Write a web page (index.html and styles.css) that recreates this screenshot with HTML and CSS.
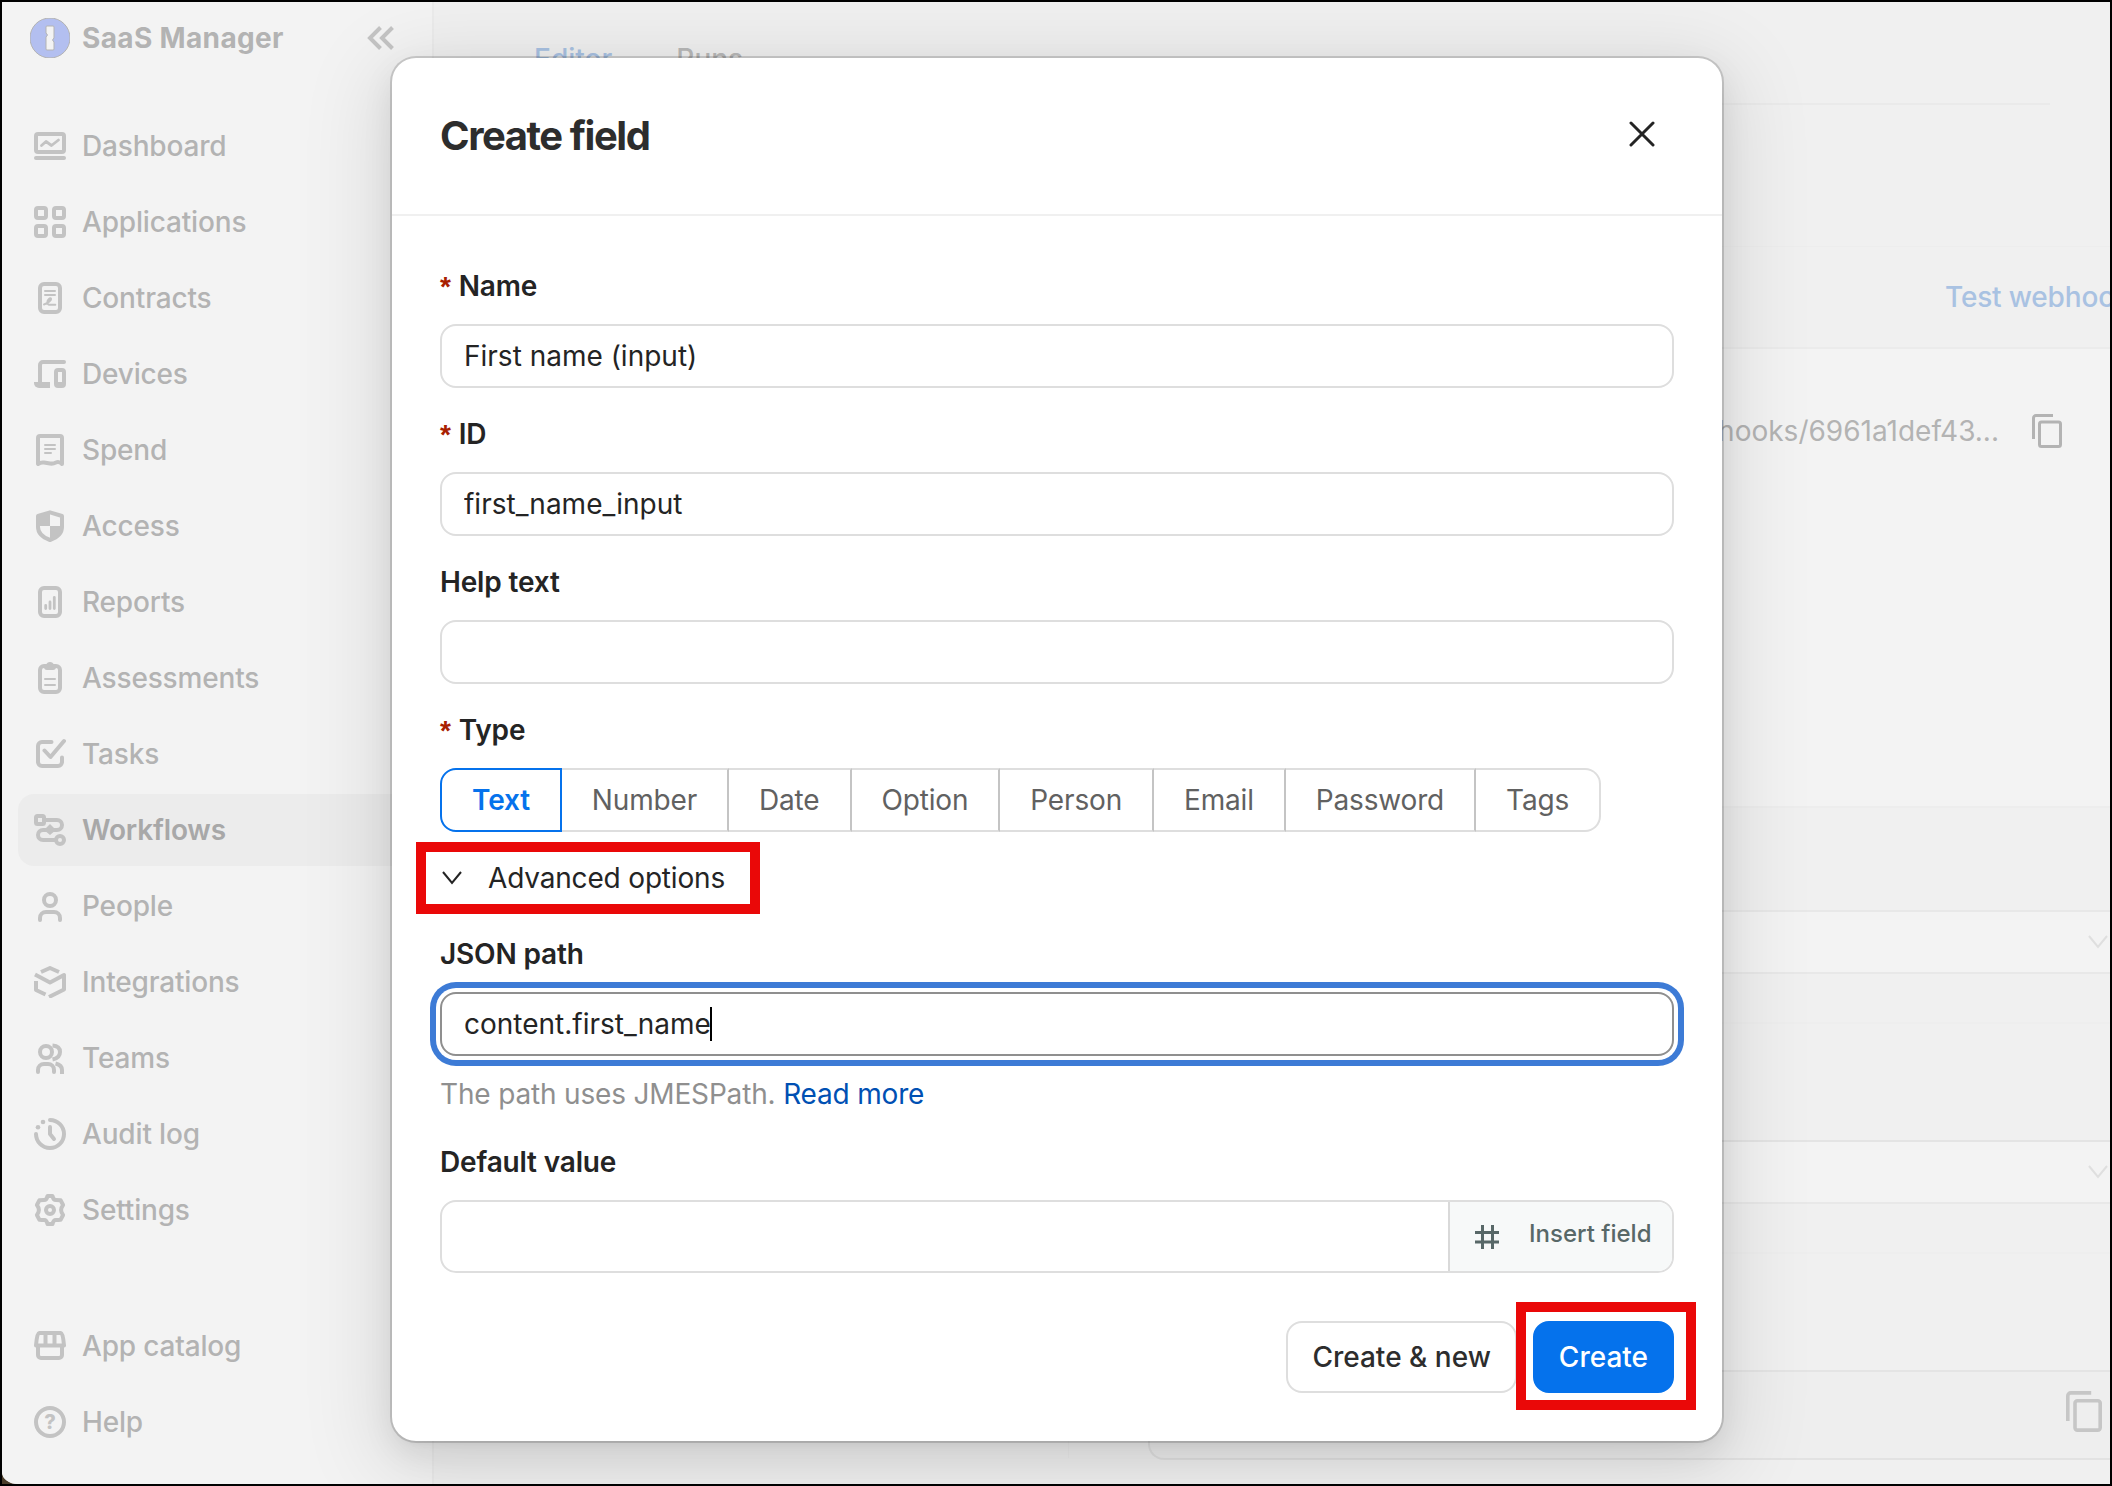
FILE: index.html
```html
<!DOCTYPE html>
<html lang="en">
<head>
    <meta charset="UTF-8">
    <meta name="viewport" content="width=device-width, initial-scale=1.0">
    <title>SaaS Manager - Create field</title>
    <link rel="stylesheet" href="styles.css">
</head>
<body>
    <div class="app">
        <aside class="sidebar">
            <div class="brand">
                <svg class="logo" viewBox="0 0 40 40"><circle cx="20" cy="20" r="20" fill="#b3bff0"/><path d="M17 8h6a1 1 0 0 1 1 1v11l-1.500 2 1.500 2v7a1 1 0 0 1-1 1h-6a1 1 0 0 1-1-1V19l1.500-2L16 15V9a1 1 0 0 1 1-1z" fill="#f3f3f3"/></svg>
                <span>SaaS Manager</span>
                <svg class="collapse" viewBox="0 0 28 24"><path d="M13.500 1.500 3 12l10.500 10.500M25.500 1.500 15 12l10.500 10.500"/></svg>
            </div>
            <nav class="nav">
                <a class="nav-item"><svg viewBox="0 0 32 32"><rect x="2" y="4" width="28" height="18" rx="2"/><path d="M2 28h28"/><path class="thin" d="M7.500 15.500l4.500-4 5.500 4 7-5.500"/></svg>Dashboard</a>
                <a class="nav-item"><svg viewBox="0 0 32 32"><rect x="2" y="2" width="10" height="10" rx="2"/><rect x="20" y="2" width="10" height="10" rx="2"/><rect x="2" y="20" width="10" height="10" rx="2"/><rect x="20" y="20" width="10" height="10" rx="2"/></svg>Applications</a>
                <a class="nav-item"><svg viewBox="0 0 32 32"><rect x="6" y="2" width="20" height="28" rx="4"/><path class="fine" d="M11 9h10M11 13h10M10 22.500c3-1 7.500-4 7-5.800-.6-1.400-3.600.8-3.600 3.600 0 2.400 2 2.700 3.400 2.500h4.500"/></svg>Contracts</a>
                <a class="nav-item"><svg viewBox="0 0 32 32"><path d="M30 4H9a3 3 0 0 0-3 3v18"/><path class="solid" d="M0 24h16v6H5a5 5 0 0 1-5-5z"/><rect x="22" y="12" width="8" height="16" rx="2"/><path class="solid" d="M22 24h8v4h-8z"/></svg>Devices</a>
                <a class="nav-item"><svg viewBox="0 0 32 32"><path d="M4 30V4a2 2 0 0 1 2-2h20a2 2 0 0 1 2 2v26q-3-3-6-1.500t-6 1-6-1-6 1.500z"/><path class="fine" d="M11 11h10M11 15h10M11 19h6"/></svg>Spend</a>
                <a class="nav-item"><svg viewBox="0 0 32 32"><path d="M16 2.300 4 6v11c0 6 5 10.500 12 13 7-2.500 12-7 12-13V6z"/><path class="solid" d="M16 2 4 6v10h12zM16 16h12v1c0 6-5 10.500-12 13z"/></svg>Access</a>
                <a class="nav-item"><svg viewBox="0 0 32 32"><rect x="6" y="2" width="20" height="28" rx="4"/><path class="thin" d="M11.700 19.500v3M16 16v6.500M20.300 11.500v11"/></svg>Reports</a>
                <a class="nav-item"><svg viewBox="0 0 32 32"><rect x="6" y="4" width="20" height="26" rx="4"/><path class="solid" d="M10 3h2q1-3 4-3t4 3h2v2a3 3 0 0 1-3 3h-6a3 3 0 0 1-3-3z"/><path class="fine" d="M11 17h10M11 23h10"/></svg>Assessments</a>
                <a class="nav-item"><svg viewBox="0 0 32 32"><path d="M17.500 4H8a4 4 0 0 0-4 4v16a4 4 0 0 0 4 4h16a4 4 0 0 0 4-4v-4.500M10.500 12.500l6 6.500L30 3"/></svg>Tasks</a>
                <a class="nav-item active"><svg viewBox="0 0 32 32"><rect x="2" y="2" width="8" height="8" rx="1.500"/><path d="M12 6h11a5 5 0 0 1 0 10H9a5 5 0 0 0 0 10h12"/><circle cx="26" cy="26" r="4"/><path class="solid" d="M16 10l6 6-6 5-6-5z"/></svg>Workflows</a>
                <a class="nav-item"><svg viewBox="0 0 32 32"><circle cx="16" cy="10" r="6"/><path d="M6 30v-2a6 6 0 0 1 6-6h8a6 6 0 0 1 6 6v2"/></svg>People</a>
                <a class="nav-item"><svg viewBox="0 0 32 32"><path class="cut" d="M7 6l9-4 9 4M1 8.500l15 8L30 9v14.500L15 31M2 15v9l9.500 4.500"/></svg>Integrations</a>
                <a class="nav-item"><svg viewBox="0 0 32 32"><circle cx="12" cy="10" r="6"/><path d="M4 30v-2a6 6 0 0 1 6-6h4a6 6 0 0 1 6 6v2"/><path class="cut" d="M18.500 3.500q7.500.5 7.500 6.500t-7.500 7.500M21.500 21.500Q28 23 28 28v4"/></svg>Teams</a>
                <a class="nav-item"><svg viewBox="0 0 32 32"><path d="M16 2A14 14 0 1 1 2 16M16 9v7l4 5"/><circle class="solid" cx="9" cy="4" r="2.300"/><circle class="solid" cx="4" cy="9.300" r="2.300"/></svg>Audit log</a>
                <a class="nav-item"><svg viewBox="0 0 32 32"><path d="M13.500 2h5q.8 4 3.300 4t4.800.3l2.500 4.700q-2 2.500-2 5t2 5l-2.500 4.700q-2.300.3-4.800.3T18.500 30h-5q-.8-4-3.300-4t-4.800-.3L2.900 21q2-2.500 2-5t-2-5l2.500-4.700q2.300-.3 4.800-.3T13.500 2z"/><circle cx="16" cy="16" r="4"/></svg>Settings</a>
            </nav>
            <nav class="nav nav-bottom">
                <a class="nav-item"><svg viewBox="0 0 32 32"><path d="M5 3h22q2 0 3 12.500H2Q3 3 5 3z"/><path d="M4 16v9a3 3 0 0 0 3 3h18a3 3 0 0 0 3-3v-9M11.500 4v11M20.500 4v11"/></svg>App catalog</a>
                <a class="nav-item"><svg viewBox="0 0 32 32"><circle cx="16" cy="16" r="14"/><text x="16" y="23" text-anchor="middle">?</text></svg>Help</a>
            </nav>
        </aside>

        <main class="main">
            <div class="tabs">
                <span class="tab current">Editor</span>
                <span class="tab">Runs</span>
            </div>
            <div class="workspace">
                <div class="canvas"></div>
                <div class="panel">
                    <div class="panel-head">Test webhook</div>
                    <div class="panel-url">
                        <span>webhooks/6961a1def43...</span>
                        <svg class="copy" viewBox="0 0 30 34"><path d="M1.500 25V4a2.500 2.500 0 0 1 2.500-2.500h17"/><rect x="7.500" y="8" width="21" height="24.500" rx="2"/></svg>
                    </div>
                    <div class="panel-group"></div>
                    <div class="panel-select"><svg viewBox="0 0 20 14"><path d="M1 1l9 11 9-11"/></svg></div>
                    <div class="panel-gap"></div>
                    <div class="panel-row"></div>
                    <div class="panel-select"><svg viewBox="0 0 20 14"><path d="M1 1l9 11 9-11"/></svg></div>
                    <div class="panel-gap"></div>
                    <div class="panel-row"></div>
                    <div class="panel-last">
                        <svg class="copy" viewBox="0 0 30 34"><path d="M1.500 25V4a2.500 2.500 0 0 1 2.500-2.500h17"/><rect x="7.500" y="8" width="21" height="24.500" rx="2"/></svg>
                    </div>
                </div>
            </div>
        </main>
    </div>

    <div class="modal">
        <header class="modal-header">
            <h1>Create field</h1>
            <svg class="close" viewBox="0 0 26 26"><path d="M2 2l22 22M24 2L2 24"/></svg>
        </header>
        <div class="modal-body">
            <label class="label"><i>*</i>Name</label>
            <input class="input" type="text" value="First name (input)">
            <label class="label"><i>*</i>ID</label>
            <input class="input" type="text" value="first_name_input">
            <label class="label">Help text</label>
            <input class="input" type="text">
            <label class="label"><i>*</i>Type</label>
            <div class="types">
                <span class="type selected">Text</span>
                <span class="type">Number</span>
                <span class="type">Date</span>
                <span class="type">Option</span>
                <span class="type">Person</span>
                <span class="type">Email</span>
                <span class="type">Password</span>
                <span class="type">Tags</span>
            </div>
            <div class="advanced">
                <svg viewBox="0 0 20 14"><path d="M1 1l9 11 9-11"/></svg>
                <span>Advanced options</span>
            </div>
            <label class="label">JSON path</label>
            <div class="input focused">content.first_name<span class="caret"></span></div>
            <p class="hint">The path uses JMESPath. <a>Read more</a></p>
            <label class="label">Default value</label>
            <div class="input-group">
                <div class="group-value"></div>
                <div class="insert">
                    <svg viewBox="0 0 26 26"><path d="M8.500 1v24M18.500 1v24M1 8.500h24M1 18h24"/></svg>
                    <span>Insert field</span>
                </div>
            </div>
            <footer class="modal-footer">
                <button class="btn">Create &amp; new</button>
                <button class="btn primary">Create</button>
            </footer>
        </div>
        <div class="marker marker-advanced"></div>
        <div class="marker marker-create"></div>
    </div>
</body>
</html>
```
FILE: styles.css
```css
* {
    box-sizing: border-box;
}
body {
    margin: 0;
    width: 2112px;
    height: 1486px;
    position: relative;
    overflow: hidden;
    border: 2px solid #000;
    background-color: #4a3d2a;
    font-family: Inter, sans-serif;
    font-size: 28px;
    letter-spacing: -0.17px;
    color: #242424;
}
svg {
    display: block;
    flex-shrink: 0;
    fill: none;
    stroke: currentColor;
}
.app {
    display: flex;
    height: 1482px;
    background-color: #f0f0f0;
    border-bottom-left-radius: 16px 12px;
    overflow: hidden;
}

/* Sidebar */
.sidebar {
    width: 432px;
    flex-shrink: 0;
    background-color: #f3f3f3;
    border-right: 2px solid #ebebeb;
    color: #b3b3b3;
    font-weight: 500;
}
.brand {
    display: flex;
    align-items: center;
    height: 72px;
    padding-left: 28px;
    font-weight: 700;
    letter-spacing: 0.35px;
}
.logo {
    width: 40px;
    height: 40px;
    margin-right: 12px;
}
.collapse {
    width: 28px;
    height: 24px;
    margin-left: auto;
    margin-right: 37px;
    stroke-width: 4;
    color: #c4c4c4;
}
.nav {
    display: flex;
    flex-direction: column;
    gap: 4px;
    padding: 36px 0 0 16px;
}
.nav-bottom {
    padding-top: 64px;
}
.nav-item {
    display: flex;
    align-items: center;
    gap: 16px;
    height: 72px;
    padding-left: 16px;
    border-radius: 16px 0 0 16px;
}
.nav-item svg {
    width: 32px;
    height: 32px;
    color: #c3c3c3;
    stroke-width: 4;
    stroke-linecap: round;
    stroke-linejoin: round;
}
.nav-item svg .thin {
    stroke-width: 2.8;
}
.nav-item svg .fine {
    stroke-width: 2;
}
.nav-item svg .cut {
    stroke-linecap: butt;
}
.nav-item svg .solid {
    fill: currentColor;
    stroke: none;
}
.nav-item svg text {
    fill: currentColor;
    stroke: none;
    font-size: 20px;
    font-weight: 800;
}
.nav-item.active {
    background-color: #ececec;
    color: #a8a8a8;
    font-weight: 600;
}

/* Page behind the dialog */
.main {
    flex: 1;
    min-width: 0;
}
.tabs {
    display: flex;
    gap: 64px;
    height: 103px;
    margin-right: 60px;
    padding: 40px 0 0 100px;
    border-bottom: 2px solid #eaeaea;
    color: #b9b9b9;
    font-weight: 500;
    letter-spacing: 0;
}
.tab.current,
.panel-head {
    color: #a9c2e2;
}
.workspace {
    display: flex;
    padding-top: 141px;
}
.canvas {
    width: 635px;
    height: 1212px;
    border-right: 1px solid #ececec;
    margin-right: 79px;
    flex-shrink: 0;
}
.panel {
    flex: 1;
    min-width: 0;
    overflow: hidden;
    color: #b3b3b3;
}
.panel-head {
    height: 103px;
    padding: 33px 0 0 797px;
    border-top: 1px solid #ededed;
    border-bottom: 2px solid #ebebeb;
    font-weight: 500;
    white-space: nowrap;
}
.panel-url {
    display: flex;
    justify-content: flex-end;
    align-items: flex-start;
    gap: 33px;
    height: 459px;
    padding: 65px 48px 0 0;
    background-color: #f3f3f3;
    border-bottom: 2px solid #ededed;
    letter-spacing: 0;
}
.copy {
    width: 30px;
    height: 34px;
    stroke-width: 3;
}
.panel-group {
    height: 104px;
    border-bottom: 2px solid #e8e8e8;
}
.panel-select {
    display: flex;
    justify-content: flex-end;
    height: 62px;
    padding: 23px 2px 0 0;
    background-color: #f3f3f3;
    border-bottom: 2px solid #e8e8e8;
    color: #dfdfdf;
}
.panel-select svg {
    width: 20px;
    height: 14px;
    stroke-width: 2;
}
.panel-gap {
    height: 50px;
    border-bottom: 2px solid #eeeeee;
}
.panel-row {
    height: 118px;
    border-bottom: 2px solid #e4e4e4;
}
.panel-last {
    display: flex;
    justify-content: flex-end;
    height: 88px;
    padding: 19px 8px 0 0;
    background-color: #eeeeee;
    border-left: 2px solid #e2e2e2;
    border-bottom: 2px solid #e2e2e2;
    border-bottom-left-radius: 16px;
    color: #c6c6c6;
}
.panel-last .copy {
    width: 36px;
    height: 41px;
}

/* Dialog */
.modal {
    position: absolute;
    left: 390px;
    top: 56px;
    width: 1330px;
    height: 1383px;
    background-color: #fff;
    border-radius: 24px;
    box-shadow: 0 0 0 2px rgba(0, 0, 0, 0.15),
                0 12px 32px rgba(0, 0, 0, 0.08),
                0 6px 12px -8px rgba(0, 0, 0, 0.12),
                0 18px 80px 16px rgba(0, 0, 0, 0.1);
}
.modal-header {
    display: flex;
    align-items: center;
    justify-content: space-between;
    height: 158px;
    padding: 0 67px 4px 48px;
    border-bottom: 2px solid #f0f0f0;
}
.modal-header h1 {
    margin: 0;
    padding-top: 2px;
    font-size: 40px;
    font-weight: 700;
    letter-spacing: -1.45px;
    color: #2d2d2d;
}
.close {
    width: 26px;
    height: 26px;
    stroke-width: 3;
    stroke-linecap: round;
}
.modal-body {
    padding: 48px;
}
.label {
    display: block;
    height: 44px;
    line-height: 44px;
    margin-bottom: 16px;
    font-weight: 600;
}
.label i {
    margin-right: 8px;
    font-family: "Liberation Sans", sans-serif;
    font-style: normal;
    color: #a82000;
}
.input {
    display: flex;
    align-items: center;
    width: 100%;
    height: 64px;
    margin-bottom: 24px;
    padding: 0 22px;
    border: 2px solid #dedede;
    border-radius: 16px;
    outline: none;
    background-color: #fff;
    font: inherit;
    letter-spacing: 0;
    color: inherit;
}
.input.focused {
    margin-bottom: 16px;
    border-color: #8f8f8f;
    box-shadow: 0 0 0 4px #fff, 0 0 0 10px #3d7bd6;
}
.caret {
    width: 2px;
    height: 34px;
    margin-left: -1px;
    background-color: #000;
}
.types {
    display: flex;
    height: 64px;
}
.type {
    display: flex;
    align-items: center;
    padding: 0 30px;
    border: 2px solid #dedede;
    border-left: none;
    border-right-color: #c4c4c4;
    color: #616161;
}
.type.selected {
    border: 2px solid #0572ec;
    border-radius: 16px 0 0 16px;
    color: #0572ec;
    font-weight: 600;
}
.type:last-child {
    border-right-color: #dedede;
    border-radius: 0 16px 16px 0;
}
.advanced {
    display: flex;
    align-items: center;
    gap: 26px;
    height: 92px;
    margin-bottom: 8px;
    padding-left: 2px;
}
.advanced svg {
    width: 20px;
    height: 14px;
    stroke-width: 2;
}
.hint {
    height: 44px;
    line-height: 44px;
    margin: 0 0 24px;
    color: #8f8f8f;
}
.hint a {
    color: #0050b3;
}
.input-group {
    display: flex;
    height: 73px;
    border: 2px solid #dedede;
    border-radius: 16px;
    overflow: hidden;
}
.group-value {
    flex: 1;
}
.insert {
    display: flex;
    align-items: center;
    gap: 29px;
    width: 224px;
    padding-left: 24px;
    border-left: 2px solid #d9d9d9;
    background-color: #f7f9f9;
    color: #586868;
    font-size: 24px;
    font-weight: 500;
    letter-spacing: 0;
}
.insert svg {
    width: 26px;
    height: 26px;
    stroke-width: 3;
}
.insert span {
    padding-bottom: 7px;
}
.modal-footer {
    display: flex;
    justify-content: flex-end;
    gap: 16px;
    margin-top: 48px;
}
.btn {
    height: 72px;
    padding: 0 24px;
    border: 2px solid #dedede;
    border-radius: 16px;
    background-color: #fff;
    font: inherit;
    font-weight: 500;
    color: #2d2d2d;
}
.btn.primary {
    border-color: #0572ec;
    background-color: #0572ec;
    color: #fff;
}

/* Highlight boxes drawn over the dialog */
.marker {
    position: absolute;
    border: 10px solid #ea0808;
}
.marker-advanced {
    left: 24px;
    top: 784px;
    width: 344px;
    height: 72px;
}
.marker-create {
    left: 1124px;
    top: 1244px;
    width: 180px;
    height: 108px;
}
```
